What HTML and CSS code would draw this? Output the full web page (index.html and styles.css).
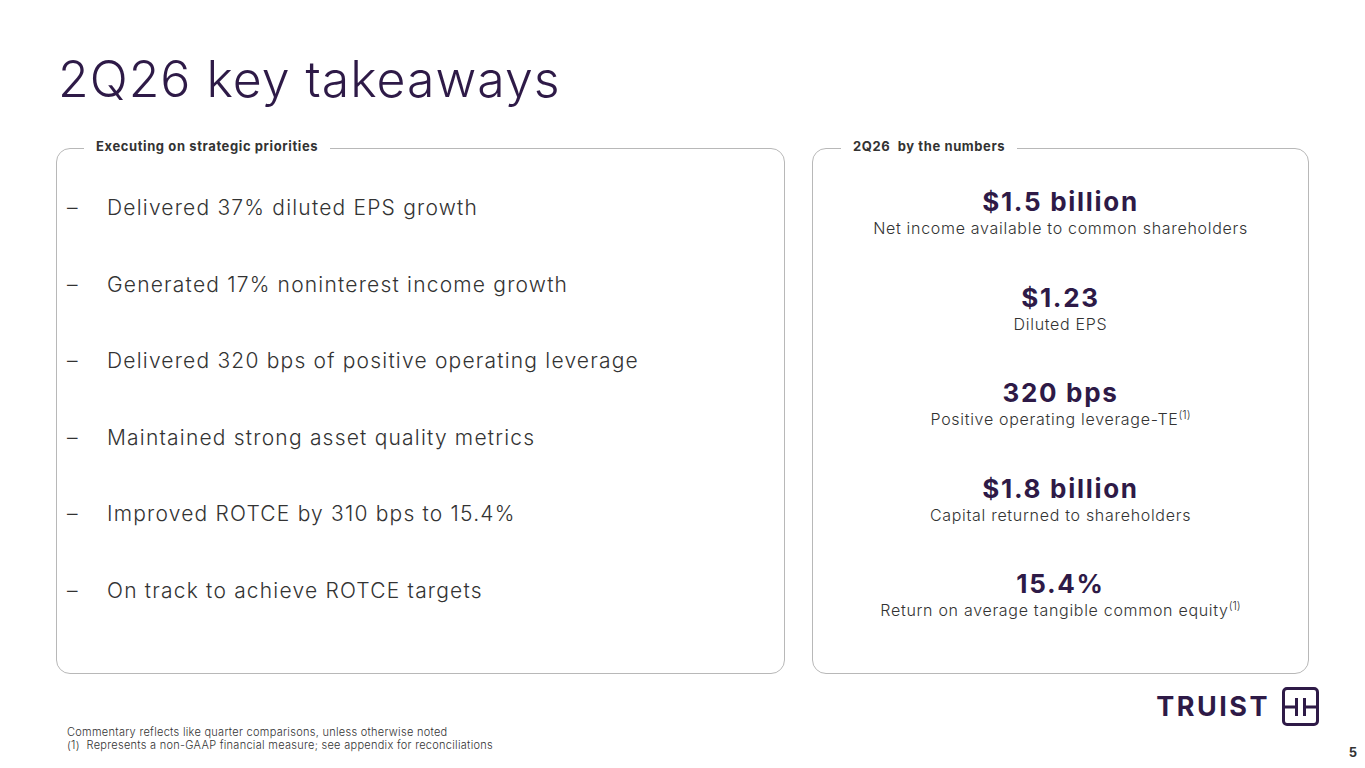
FILE: index.html
```html
<!DOCTYPE html>
<html lang="en">
<head>
<meta charset="utf-8">
<title>2Q26 key takeaways</title>
<link rel="stylesheet" href="styles.css">
</head>
<body>
<div class="slide">
  <h1 class="title">2Q26 key takeaways</h1>
  <div class="cards">
    <fieldset class="card card-left">
      <legend class="card-label">Executing on strategic priorities</legend>
      <ul class="bullets">
        <li><span class="dash">–</span>Delivered 37% diluted EPS growth</li>
        <li><span class="dash">–</span>Generated 17% noninterest income growth</li>
        <li><span class="dash">–</span>Delivered 320 bps of positive operating leverage</li>
        <li><span class="dash">–</span>Maintained strong asset quality metrics</li>
        <li><span class="dash">–</span>Improved ROTCE by 310 bps to 15.4%</li>
        <li><span class="dash">–</span>On track to achieve ROTCE targets</li>
      </ul>
    </fieldset>
    <fieldset class="card card-right">
      <legend class="card-label">2Q26&nbsp; by the numbers</legend>
      <div class="stats">
        <div class="stat"><div class="stat-value">$1.5 billion</div><div class="stat-label">Net income available to common shareholders</div></div>
        <div class="stat"><div class="stat-value">$1.23</div><div class="stat-label">Diluted EPS</div></div>
        <div class="stat"><div class="stat-value">320 bps</div><div class="stat-label">Positive operating leverage-TE<sup>(1)</sup></div></div>
        <div class="stat"><div class="stat-value">$1.8 billion</div><div class="stat-label">Capital returned to shareholders</div></div>
        <div class="stat"><div class="stat-value">15.4%</div><div class="stat-label">Return on average tangible common equity<sup>(1)</sup></div></div>
      </div>
    </fieldset>
  </div>
  <div class="footer">
    <div class="notes">
      <div>Commentary reflects like quarter comparisons, unless otherwise noted</div>
      <div>(1)&nbsp; Represents a non-GAAP financial measure; see appendix for reconciliations</div>
    </div>
    <div class="brand-col">
      <div class="logo">
        <span class="wordmark">TRUIST</span>
        <svg class="mark" width="37" height="39" viewBox="0 0 37 39" aria-hidden="true">
          <rect x="1.5" y="1.5" width="34" height="36" rx="3.5" fill="none" stroke="#2e1a47" stroke-width="3"/>
          <path d="M1.5 20H14.5M22.5 20H35.5M14.5 11V29M22.5 11V29" fill="none" stroke="#2e1a47" stroke-width="3"/>
        </svg>
      </div>
      <div class="page-num">5</div>
    </div>
  </div>
</div>
</body>
</html>
```
FILE: styles.css
```css
* { box-sizing: border-box; }
html, body { margin: 0; padding: 0; background: #fff; }
body { font-family: Inter, "Noto Sans", "Liberation Sans", sans-serif; color: #333; }

.slide {
  width: 1365px;
  height: 768px;
  overflow: hidden;
  padding: 49px 0 0 0;
  display: flex;
  flex-direction: column;
}

.title {
  margin: 0 0 0 58px;
  font-size: 50px;
  line-height: 60px;
  font-weight: 300;
  color: #2e1a47;
  letter-spacing: 1px;
}

.cards {
  display: flex;
  gap: 27px;
  margin: 29px 0 0 56px;
}

.card {
  margin: 0;
  padding: 0;
  min-width: 0;
  border: 1.5px solid #b8b8b8;
  border-radius: 14px;
  height: 536px;
}
.card-left { width: 729px; }
.card-right { width: 497px; }

.card-label {
  font-size: 13px;
  line-height: 16px;
  font-weight: 700;
  color: #333;
  padding: 0 12px 4px;
  margin-left: 27px;
  letter-spacing: 0.6px;
}
.card-right .card-label { margin-left: 28px; }

.bullets {
  list-style: none;
  margin: 0;
  padding: 36px 0 0 10px;
  display: flex;
  flex-direction: column;
  gap: 48.6px;
}
.bullets li {
  font-size: 21px;
  line-height: 28px;
  font-weight: 300;
  color: #333;
  display: flex;
  letter-spacing: 1.2px;
}
.dash { width: 40px; flex: none; letter-spacing: 0; }

.stats {
  padding-top: 29px;
  display: flex;
  flex-direction: column;
  align-items: center;
  gap: 43.6px;
  text-align: center;
}
.stat-value {
  font-size: 26px;
  line-height: 30px;
  font-weight: 700;
  color: #2e1a47;
  letter-spacing: 1.7px;
}
.stat-label {
  font-size: 16px;
  line-height: 22px;
  font-weight: 300;
  color: #333;
  letter-spacing: 0.7px;
}
.stat-label sup {
  font-size: 11px;
  line-height: 0;
  vertical-align: 6px;
  letter-spacing: 0;
}

.footer {
  display: flex;
  align-items: flex-end;
  margin-top: 13px;
  padding: 0 8px 0 67px;
}
.notes {
  flex: 1;
  font-size: 11px;
  line-height: 13px;
  font-weight: 300;
  color: #333;
  padding-bottom: 7px;
  letter-spacing: 0.28px;
}
.brand-col {
  display: flex;
  flex-direction: column;
  align-items: flex-end;
  gap: 19px;
}
.logo {
  display: flex;
  align-items: center;
  gap: 12px;
  margin-right: 38px;
}
.wordmark {
  font-size: 27px;
  line-height: 39px;
  font-weight: 700;
  letter-spacing: 2.5px;
  color: #2e1a47;
}
.mark { display: block; }
.page-num {
  font-size: 13px;
  line-height: 14px;
  font-weight: 700;
  color: #333;
}
```
